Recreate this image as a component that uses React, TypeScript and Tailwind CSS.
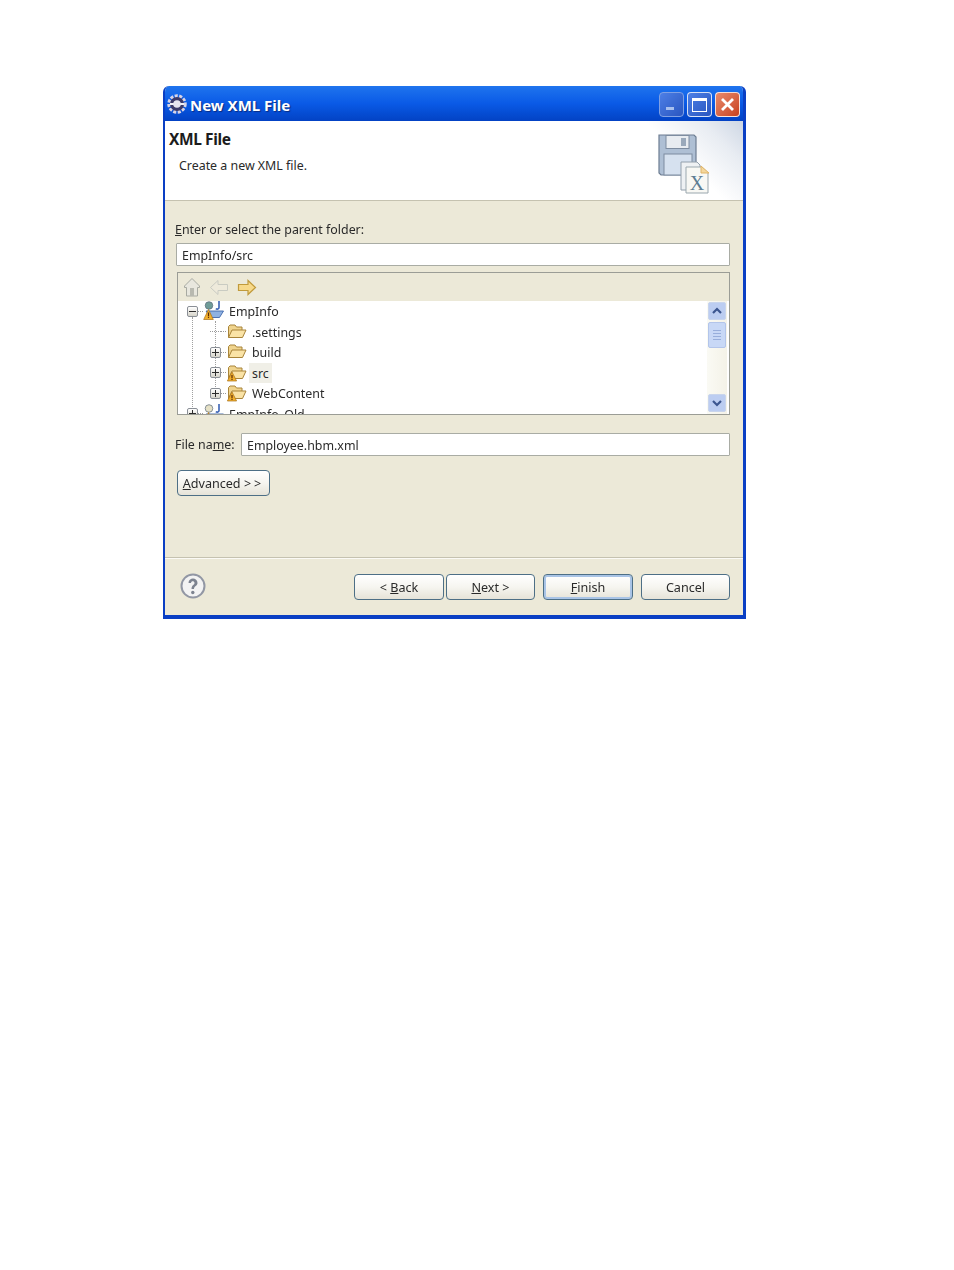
import React from "react";

const ui = "font-['Noto_Sans','Open_Sans',sans-serif] text-[12.4px] text-[#2a2a2a]";

function Folder({ warn = false }: { warn?: boolean }) {
  return (
    <svg width="20" height="18" viewBox="0 0 20 18" className="shrink-0 ml-[1px]">
      <path d="M1.500 14.500V3.500L3 2h5l1.500 2H15v3" fill="#f0d48e" stroke="#a8843a" strokeWidth="1" />
      <path d="M1.500 14.500L5 7h14l-3.500 7.500z" fill="#fae3a6" stroke="#a8843a" strokeWidth="1" strokeLinejoin="round" />
      {warn && (
        <g>
          <path d="M5 8l4.600 9H.4z" fill="#f2b02c" stroke="#a8701a" strokeWidth=".7" />
          <rect x="4.400" y="11" width="1.200" height="3.200" fill="#5b2b08" />
          <rect x="4.400" y="14.800" width="1.200" height="1.200" fill="#5b2b08" />
        </g>
      )}
    </svg>
  );
}

function ProjectIcon({ clipped = false }: { clipped?: boolean }) {
  return (
    <svg width="21" height="20" viewBox="0 0 21 20" className="shrink-0">
      <circle cx="6" cy="4.500" r="3.800" fill={clipped ? "#e6e1c6" : "#6f9c98"} stroke="#5b6a78" strokeWidth=".7" />
      <path d="M16 0v6.500c0 1.800-2 2-3.200 1.200" fill="none" stroke="#3b63b5" strokeWidth="1.600" />
      <path d="M3 10h17.500l-4 6.500H7.500z" fill="#8fb2e2" stroke="#3f67aa" strokeWidth=".9" />
      <path d="M5.500 8.500l4.800 10H.7z" fill="#f2b02c" stroke="#a8701a" strokeWidth=".7" />
      <rect x="4.900" y="11.500" width="1.200" height="3.600" fill="#5b2b08" />
      <rect x="4.900" y="15.700" width="1.200" height="1.200" fill="#5b2b08" />
    </svg>
  );
}

function Expander({ minus = false }: { minus?: boolean }) {
  return (
    <span className="w-[11px] h-[11px] shrink-0 border border-[#8a8f96] rounded-[2px] bg-gradient-to-b from-white to-[#d6d4ca] flex items-center justify-center relative">
      <span className="absolute w-[7px] h-px bg-[#2c2c2c]" />
      {!minus && <span className="absolute w-px h-[7px] bg-[#2c2c2c]" />}
    </span>
  );
}

function Row({
  level,
  expander,
  icon,
  label,
  selected = false,
}: {
  level: 0 | 1;
  expander: "plus" | "minus" | "none";
  icon: React.ReactNode;
  label: string;
  selected?: boolean;
}) {
  return (
    <div className={`h-[20.5px] flex items-center shrink-0 ${level === 1 ? "pl-[32px]" : "pl-[9px]"}`}>
      <span className="w-[11px] flex justify-center shrink-0">
        {expander === "none" ? (
          <span className="w-[11px] h-px border-t border-dotted border-[#9a9a9a]" />
        ) : (
          <Expander minus={expander === "minus"} />
        )}
      </span>
      <span className="w-[5px] h-px border-t border-dotted border-[#9a9a9a] shrink-0" />
      <span className="shrink-0 w-[22px] flex items-center">{icon}</span>
      <span className={`ml-[1px] px-[3px] h-[20px] leading-[22px] whitespace-nowrap ${selected ? "bg-[#f0efe7]" : ""}`}>{label}</span>
    </div>
  );
}

function Btn({ children, def = false, w }: { children: React.ReactNode; def?: boolean; w: string }) {
  return (
    <button
      className={`${w} h-[26px] pt-[2px] rounded-[4px] border border-[#4d6f86] bg-gradient-to-b from-white via-[#f6f5f0] to-[#e6e3d8] font-['Noto_Sans','Open_Sans',sans-serif] text-[12.6px] text-[#2a2a2a] flex items-center justify-center ${
        def ? "shadow-[inset_0_0_0_2px_#a9c4e6]" : ""
      }`}
    >
      {children}
    </button>
  );
}

function Field({ value, className }: { value: string; className: string }) {
  return (
    <div className={`h-[23px] bg-white border border-[#a9aca4] rounded-[1px] pl-[5px] leading-[23px] ${ui} ${className}`}>{value}</div>
  );
}

function ScrollBar() {
  return (
    <div className="w-[20px] shrink-0 flex flex-col items-center pt-[1px] pb-[2px] bg-gradient-to-r from-[#fafaf4] to-[#f4f2e8]">
      <div className="w-[18px] h-[18px] rounded-[2px] border border-[#c9d5ec] bg-[#bccdf1] flex items-center justify-center">
        <svg width="12" height="10" viewBox="0 0 12 10"><path d="M2 7l4-4 4 4" fill="none" stroke="#3c5690" strokeWidth="2.200" /></svg>
      </div>
      <div className="mt-[2px] w-[18px] h-[26px] rounded-[2px] border border-[#b3c5ea] bg-[#c8d8f6] flex flex-col items-center justify-center gap-[2px]">
        <span className="w-[8px] h-px bg-[#98aedb]" />
        <span className="w-[8px] h-px bg-[#98aedb]" />
        <span className="w-[8px] h-px bg-[#98aedb]" />
        <span className="w-[8px] h-px bg-[#98aedb]" />
      </div>
      <div className="flex-1" />
      <div className="w-[18px] h-[18px] rounded-[2px] border border-[#c9d5ec] bg-[#bccdf1] flex items-center justify-center">
        <svg width="12" height="10" viewBox="0 0 12 10"><path d="M2 3l4 4 4-4" fill="none" stroke="#3c5690" strokeWidth="2.200" /></svg>
      </div>
    </div>
  );
}

function WizardIcon() {
  return (
    <svg width="62" height="66" viewBox="0 0 62 66">
      <path d="M5 3h35l2 2v36l-2 2H7l-2-2z" fill="#aebfd4" stroke="#6d7d92" strokeWidth="1.200" />
      <rect x="12" y="3.500" width="23" height="13" fill="#e8ecf1" stroke="#7d8ca0" />
      <rect x="27" y="6" width="5" height="8" fill="#9aa9bb" />
      <rect x="10" y="22" width="28" height="21" fill="#d6e1ef" stroke="#7d8ca0" />
      <path d="M27 30h16l3 3v25H27z" fill="#eef1f3" stroke="#93a0ac" />
      <path d="M32 35h16l6 6v20H32z" fill="#f8f8f4" stroke="#9aa7ae" />
      <path d="M47 34l8 7h-8z" fill="#f4d79c" stroke="#e0b569" />
      <text x="43" y="58" textAnchor="middle" fontFamily="'Liberation Serif',serif" fontSize="20" fill="#5d7d92">X</text>
    </svg>
  );
}

export default function App() {
  return (
    <div className="min-h-[1270px] bg-white pt-[86px] pl-[163px]">
      <div className={`w-[583px] h-[533px] flex flex-col rounded-t-[6px] overflow-hidden border-l-[2px] border-r-[3px] border-b-[4px] border-l-[#0a3fc4] border-r-[#0a3fc4] border-b-[#0a3fc4] bg-[#ece9d8] blur-[0.35px] ${ui}`}>
        {/* title bar */}
        <div className="h-[35px] shrink-0 -ml-[2px] -mr-[3px] flex items-center pl-[3px] pr-[6px] bg-gradient-to-b from-[#1f74ee] via-[#0a5ae6] to-[#0342c4]">
          <svg width="22" height="22" viewBox="0 0 22 22" className="shrink-0">
            <circle cx="11" cy="11" r="8" fill="none" stroke="#d8d4e6" strokeWidth="3.500" strokeDasharray="3 1.400" />
            <circle cx="11" cy="11" r="7" fill="#3d3a68" />
            <path d="M4 10h14v2H4z" fill="#f0f0f4" />
            <circle cx="11" cy="11" r="3.800" fill="#e6e4ee" />
          </svg>
          <span className="ml-[2px] pt-[3px] flex-1 font-['Noto_Sans',sans-serif] font-bold text-[15px] text-white [text-shadow:1px_1px_1px_#0a2c80]">New XML File</span>
          <div className="flex gap-[3px] mt-[2px]">
            <div className="w-[25px] h-[25px] rounded-[4px] border border-[#7fa0e4] bg-gradient-to-br from-[#4d7fe6] to-[#2a56c0] flex items-end pl-[6px] pb-[6px]">
              <span className="w-[8px] h-[3px] bg-[#a8c0ee]" />
            </div>
            <div className="w-[25px] h-[25px] rounded-[4px] border border-white/80 bg-gradient-to-br from-[#4d7fe6] to-[#2a56c0] flex items-center justify-center">
              <span className="w-[15px] h-[14px] border border-white border-t-[3px]" />
            </div>
            <div className="w-[25px] h-[25px] rounded-[4px] border border-white/80 bg-gradient-to-br from-[#e88a6c] to-[#c8401c] flex items-center justify-center">
              <svg width="15" height="15" viewBox="0 0 15 15"><path d="M2 2l11 11M13 2L2 13" stroke="#fff" strokeWidth="2.800" /></svg>
            </div>
          </div>
        </div>

        {/* header */}
        <div className="h-[80px] shrink-0 flex bg-white border-b border-[#c5c2b0]">
          <div className="flex-1 pl-[4px]">
            <div className="mt-[8px] font-bold text-[15.500px] leading-[20px] text-[#1c1c1c] tracking-[-0.4px]">XML File</div>
            <div className="mt-[7px] pl-[10px] leading-[20px]">Create a new XML file.</div>
          </div>
          <div className="w-[110px] bg-[linear-gradient(225deg,#cdd6e4_0%,#e8ecf2_22%,#ffffff_52%)] flex items-start justify-start pl-[21px] pt-[11px]">
            <WizardIcon />
          </div>
        </div>

        {/* body */}
        <div className="flex-1 min-h-0 flex flex-col pl-[10px] pr-[13px]">
          <div className="mt-[19px] h-[20px] leading-[20px]"><span className="underline">E</span>nter or select the parent folder:</div>
          <Field value="EmpInfo/src" className="mt-[3px] ml-[1px]" />
          <div className="mt-[6px] ml-[2px] h-[143px] border border-[#9b9d96] flex flex-col overflow-hidden">
            <div className="h-[28px] shrink-0 flex items-center gap-[8px] pl-[5px] bg-[#ece9d8]">
              <svg width="18" height="20" viewBox="0 0 18 20">
                <path d="M9 1.500L1.500 9v1.500h2V19h11v-8.500h2V9z" fill="#e8e7de" stroke="#a8aaa2" />
                <rect x="7" y="11" width="4" height="8" fill="#b8b9b0" />
              </svg>
              <svg width="20" height="17" viewBox="0 0 20 17"><path d="M9 1.500L1.500 8.500 9 15.500V11.500h9.500v-6H9z" fill="#eeeadb" stroke="#c9cbc2" /></svg>
              <svg width="20" height="17" viewBox="0 0 20 17"><path d="M11 1.500l7.500 7L11 15.500V11.500H1.500v-6H11z" fill="#f7d98a" stroke="#c09a3c" strokeWidth="1.200" /></svg>
            </div>
            <div className="flex-1 min-h-0 flex bg-white">
              <div className="flex-1 min-w-0 overflow-hidden relative">
                <span className="absolute left-[14px] top-[16px] h-[100px] border-l border-dotted border-[#a0a0a0]" />
                <span className="absolute left-[37px] top-[20px] h-[78px] border-l border-dotted border-[#a0a0a0]" />
                <Row level={0} expander="minus" icon={<ProjectIcon />} label="EmpInfo" />
                <Row level={1} expander="none" icon={<Folder />} label=".settings" />
                <Row level={1} expander="plus" icon={<Folder />} label="build" />
                <Row level={1} expander="plus" icon={<Folder warn />} label="src" selected />
                <Row level={1} expander="plus" icon={<Folder warn />} label="WebContent" />
                <Row level={0} expander="plus" icon={<ProjectIcon clipped />} label="EmpInfo_Old" />
              </div>
              <ScrollBar />
              <div className="w-[2px] shrink-0 bg-white" />
            </div>
          </div>
          <div className="mt-[18px] flex items-center">
            <span className="w-[66px] shrink-0 mt-[2px]">File na<span className="underline">m</span>e:</span>
            <Field value="Employee.hbm.xml" className="flex-1 border-[#a4b4c4]" />
          </div>
          <div className="mt-[14px] ml-[2px]">
            <Btn w="w-[93px]"><span><span className="underline">A</span>dvanced <span className="tracking-[3px]">&gt;&gt;</span></span></Btn>
          </div>
        </div>

        {/* footer */}
        <div className="h-[58px] shrink-0 border-t border-[#c5c2b0] flex items-start pl-[15px] pr-[13px] pt-[15px] shadow-[inset_0_1px_0_#fbfaf5]">
          <svg width="26" height="26" viewBox="0 0 26 26" className="shrink-0">
            <circle cx="13" cy="13" r="11.500" fill="#f3f3f3" stroke="#9297a4" strokeWidth="2" />
            <path d="M8.500 10c0-6 9-6 9 0 0 3-3.500 3-3.500 6h-2.500c0-4 3-4 3-6 0-2.300-3.500-2.300-3.500 0z" fill="#7d8390" />
            <circle cx="12.800" cy="19.500" r="1.700" fill="#7d8390" />
          </svg>
          <div className="ml-auto flex mt-[1px]">
            <Btn w="w-[90px]"><span>&lt; <span className="underline">B</span>ack</span></Btn>
            <div className="ml-[2px]">
              <Btn w="w-[89px]"><span><span className="underline">N</span>ext &gt;</span></Btn>
            </div>
            <div className="ml-[8px]">
              <Btn w="w-[90px]" def><span><span className="underline">F</span>inish</span></Btn>
            </div>
            <div className="ml-[8px]">
              <Btn w="w-[89px]">Cancel</Btn>
            </div>
          </div>
        </div>
      </div>
    </div>
  );
}
